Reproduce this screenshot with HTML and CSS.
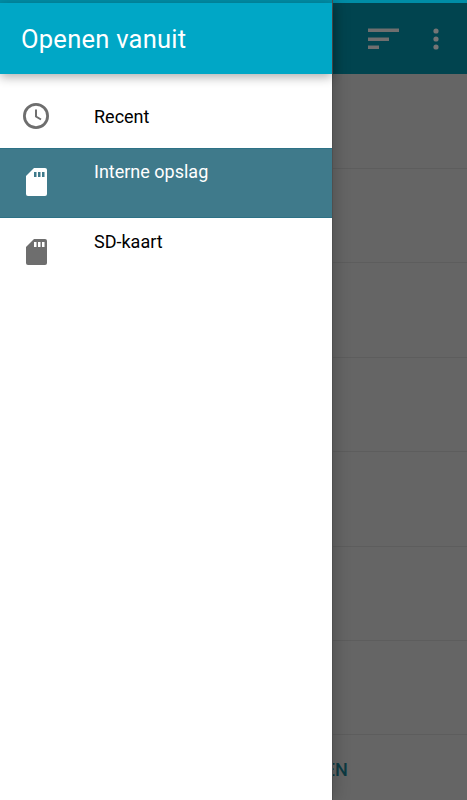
FILE: index.html
```html
<!DOCTYPE html>
<html lang="en">
<head>
    <meta charset="UTF-8">
    <title>Openen vanuit</title>
    <link rel="stylesheet" href="styles.css">
</head>
<body>
<div id="screen">
    <div id="back">
        <div class="back-status"></div>
        <div class="back-bar">
            <svg width="33" height="24" viewBox="0 0 33 24">
                <rect x="1" y="1.500" width="31" height="3.500" fill="#6f6f6f"/>
                <rect x="1" y="10.500" width="21" height="3.500" fill="#6f6f6f"/>
                <rect x="1" y="18.500" width="11" height="3.500" fill="#6f6f6f"/>
            </svg>
            <svg width="8" height="24" viewBox="0 0 8 24">
                <circle cx="4" cy="4" r="2.600" fill="#757575"/>
                <circle cx="4" cy="12" r="2.600" fill="#757575"/>
                <circle cx="4" cy="20" r="2.600" fill="#757575"/>
            </svg>
        </div>
        <ul class="back-list">
            <li class="first"></li>
            <li></li>
            <li></li>
            <li></li>
            <li></li>
            <li></li>
            <li></li>
        </ul>
        <div class="back-foot"><span>OPENEN</span></div>
    </div>

    <div id="drawer">
        <div class="drawer-status"></div>
        <div class="drawer-head">Openen vanuit</div>
        <ul class="places">
            <li class="place place-recent">
                <svg class="place-icon" width="26" height="26" viewBox="0 0 26 26">
                    <circle cx="13" cy="13" r="11.600" fill="none" stroke="#6e6e6e" stroke-width="2.800"/>
                    <path d="M13 6.500V13.500L18 16.500" fill="none" stroke="#6e6e6e" stroke-width="2"/>
                </svg>
                <span>Recent</span>
            </li>
            <li class="place place-selected">
                <svg class="place-icon" width="21" height="28" viewBox="0 0 21 28">
                    <path d="M8 0H19Q21 0 21 2V26Q21 28 19 28H2Q0 28 0 26V8Z" fill="#fff"/>
                    <path d="M8 4H10.500V9H8ZM12 4H14.500V9H12ZM16 4H18.500V9H16Z" fill="#3f7a8b"/>
                </svg>
                <span>Interne opslag</span>
            </li>
            <li class="place place-sd">
                <svg class="place-icon" width="21" height="26" viewBox="0 0 21 26">
                    <path d="M8 0H19Q21 0 21 2V24Q21 26 19 26H2Q0 26 0 24V8Z" fill="#6e6e6e"/>
                    <path d="M8 3H10.500V8H8ZM12 3H14.500V8H12ZM16 3H18.500V8H16Z" fill="#fff"/>
                </svg>
                <span>SD-kaart</span>
            </li>
        </ul>
    </div>
</div>
</body>
</html>
```

FILE: styles.css
```css
*{
    margin:0;
    padding:0;
    box-sizing:border-box;
}
html,body{
    height:100%;
}
body{
    font-family:Roboto,"Liberation Sans",sans-serif;
    background:#656565;
    overflow:hidden;
}
ul{
    list-style:none;
}
#screen{
    width:467px;
    height:800px;
    position:relative;
    overflow:hidden;
}

/* dimmed page behind the drawer */
#back{
    height:800px;
    display:flex;
    flex-direction:column;
    background:#656565;
}
.back-status{
    height:3px;
    background:#008da6;
}
.back-bar{
    height:71px;
    background:#01444f;
    display:flex;
    justify-content:flex-end;
    align-items:center;
    gap:32px;
    padding-right:27px;
}
.back-list li{
    height:94.400px;
    border-bottom:1.500px solid #5d5d5d;
}
.back-list .first{
    height:95px;
}
.back-foot{
    flex:1;
    padding:24px 0 0 278px;
    font-size:18px;
    font-weight:500;
    color:#0c3a42;
}

/* drawer */
#drawer{
    position:absolute;
    left:0;
    top:0;
    width:332px;
    height:800px;
    background:#fff;
    box-shadow:1px 0 0 #4f4f4f,5px 0 14px rgba(0,0,0,.16);
}
.drawer-status{
    height:3px;
    background:#008da6;
}
.drawer-head{
    height:71px;
    padding:21px 0 0 21px;
    background:#00a7c6;
    color:#fff;
    font-size:25.500px;
    line-height:31px;
    letter-spacing:.25px;
    box-shadow:0 3px 10px rgba(0,0,0,.32);
    position:relative;
}
.place{
    height:70px;
    padding-left:26px;
    display:flex;
    font-size:18px;
    line-height:20px;
    color:#000;
}
.place span{
    margin:14px 0 0 47px;
}
.place-icon{
    flex:none;
}
.place-recent{
    height:74px;
    padding-left:23px;
}
.place-recent span{
    margin:33px 0 0 45px;
}
.place-recent .place-icon{
    margin-top:29px;
}
.place-selected{
    background:#3f7a8b;
    border-top:1px solid #2d7286;
    border-bottom:1px solid #2d7286;
    color:#fff;
}
.place-selected span{
    margin-top:13px;
}
.place-selected .place-icon{
    margin-top:19px;
}
.place-sd .place-icon{
    margin-top:21px;
}
```
